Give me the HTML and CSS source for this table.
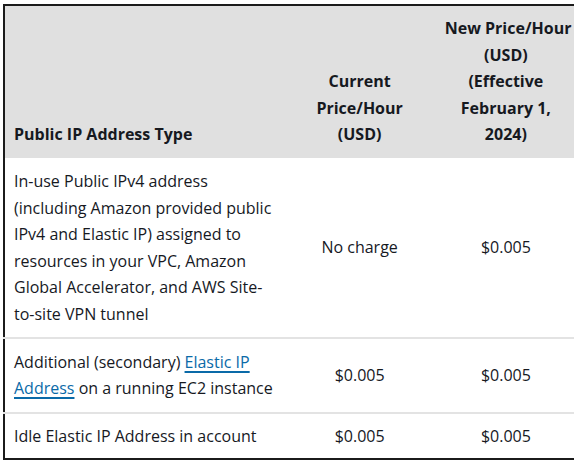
FILE: index.html
```html
<!DOCTYPE html>
<html lang="en">
<head>
<meta charset="utf-8">
<title>Public IP pricing</title>
<link rel="stylesheet" href="styles.css">
</head>
<body>
<div class="frame">
<table class="pricing">
  <colgroup>
    <col class="c1"><col class="c2"><col class="c3">
  </colgroup>
  <thead>
    <tr>
      <th class="left">Public IP Address Type</th>
      <th>Current Price/Hour (USD)</th>
      <th class="narrow"><span class="nw">New Price/Hour</span> (USD) (Effective February 1, 2024)</th>
    </tr>
  </thead>
  <tbody>
    <tr>
      <td class="left">In-use Public IPv4 address (including Amazon provided public IPv4 and Elastic IP) assigned to resources in your VPC, Amazon Global Accelerator, and AWS Site-to-site VPN tunnel</td>
      <td>No charge</td>
      <td>$0.005</td>
    </tr>
    <tr>
      <td class="left">Additional (secondary) <a class="link" href="#">Elastic IP Address</a> on a running EC2 instance</td>
      <td>$0.005</td>
      <td>$0.005</td>
    </tr>
    <tr>
      <td class="left">Idle Elastic IP Address in account</td>
      <td>$0.005</td>
      <td>$0.005</td>
    </tr>
  </tbody>
</table>
</div>
</body>
</html>
```
FILE: styles.css
```css
html, body {
  margin: 0;
  padding: 0;
  background: #ffffff;
}
body {
  font-family: "Open Sans", "Noto Sans", sans-serif;
  color: #16191f;
  overflow: hidden;
}
.frame {
  padding: 4px 0 0 3px;
  width: 600px;
}
.pricing {
  border-collapse: collapse;
  width: 577px;
  table-layout: fixed;
  border-top: 2px solid #1b1b1b;
  border-left: 2px solid #1b1b1b;
  border-bottom: 2px solid #1b1b1b;
  font-size: 16px;
  line-height: 26.6px;
}
.c1 { width: 285px; }
.c2 { width: 140px; }
.c3 { width: 150px; }
.pricing th {
  background: #e0e0e0;
  font-weight: 700;
  vertical-align: bottom;
  text-align: center;
  padding: 9px 10px 10px 10px;
}
.pricing th.narrow {
  padding-left: 15px;
  padding-right: 13px;
}
.nw {
  white-space: nowrap;
}
.pricing td {
  text-align: center;
  vertical-align: middle;
  padding: 10px 10px;
  border-top: 2px solid #e3e3e3;
  font-weight: 400;
}
.pricing tbody tr:first-child td {
  border-top: none;
  padding-top: 10px;
  padding-bottom: 9px;
}
.pricing tbody tr:last-child td {
  padding-top: 9px;
  padding-bottom: 9px;
}
.pricing td:nth-child(3) {
  padding-left: 15px;
  padding-right: 13px;
}
.pricing .left {
  text-align: left;
  padding-left: 9px;
}
.link {
  color: #0a6aa8;
  text-decoration: underline;
  text-decoration-thickness: 1.5px;
  text-underline-offset: 3px;
}
```
